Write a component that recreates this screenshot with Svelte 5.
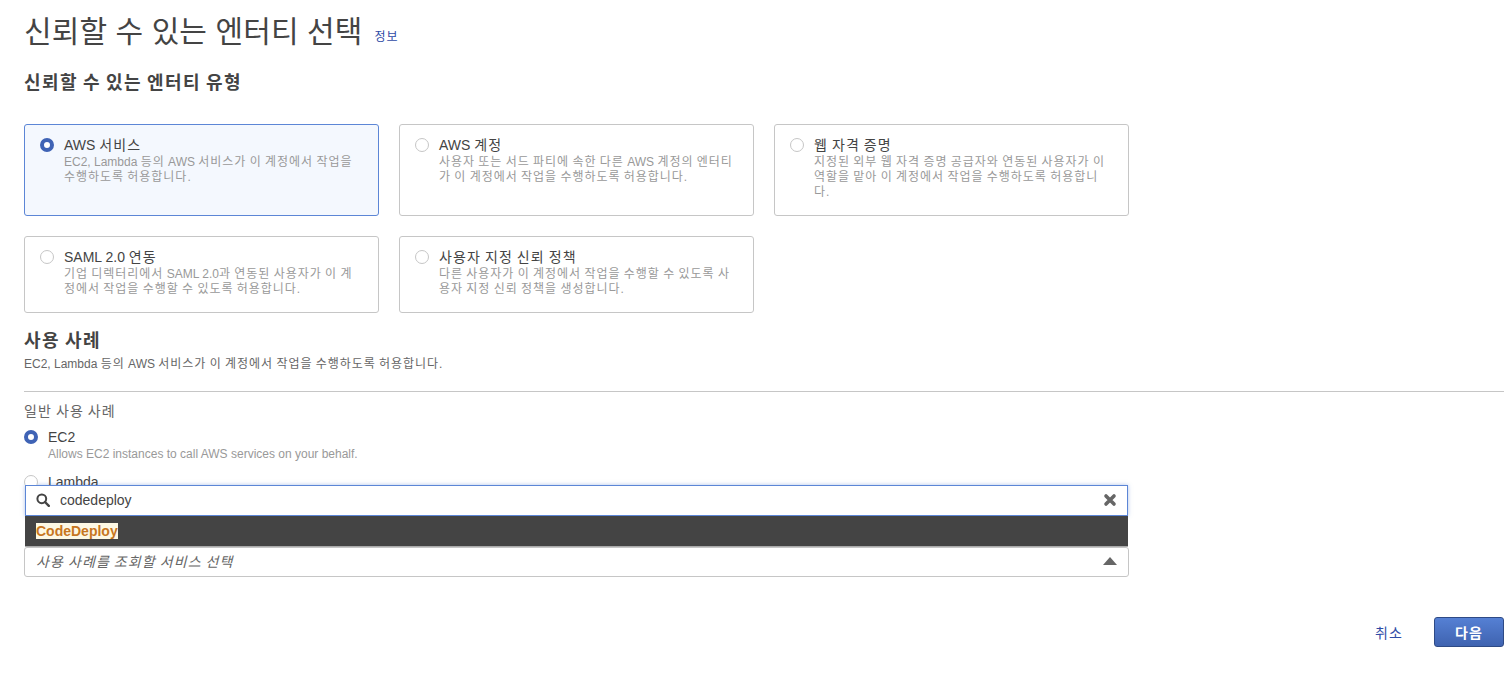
<script lang="ts">
  const entityTypes = [
    { title: "AWS 서비스", desc: "EC2, Lambda 등의 AWS 서비스가 이 계정에서 작업을 수행하도록 허용합니다.", selected: true },
    { title: "AWS 계정", desc: "사용자 또는 서드 파티에 속한 다른 AWS 계정의 엔터티가 이 계정에서 작업을 수행하도록 허용합니다.", selected: false },
    { title: "웹 자격 증명", desc: "지정된 외부 웹 자격 증명 공급자와 연동된 사용자가 이 역할을 맡아 이 계정에서 작업을 수행하도록 허용합니다.", selected: false },
    { title: "SAML 2.0 연동", desc: "기업 디렉터리에서 SAML 2.0과 연동된 사용자가 이 계정에서 작업을 수행할 수 있도록 허용합니다.", selected: false },
    { title: "사용자 지정 신뢰 정책", desc: "다른 사용자가 이 계정에서 작업을 수행할 수 있도록 사용자 지정 신뢰 정책을 생성합니다.", selected: false }
  ];

  // hangul is set wider than latin in the original font
  function runs(text: string) {
    return text.split(/([\uAC00-\uD7A3]+)/).filter(Boolean).map((t) => ({
      t,
      ko: /[\uAC00-\uD7A3]/.test(t)
    }));
  }
</script>

{#snippet ko(text: string)}{#each runs(text) as run}<span class:ko={run.ko}>{run.t}</span>{/each}{/snippet}

<div class="page">
  <div class="title-row">
    <h1>신뢰할 수 있는 엔터티 선택</h1>
    <a class="info" href="#info">{@render ko("정보")}</a>
  </div>

  <h2 class="entity-heading">{@render ko("신뢰할 수 있는 엔터티 유형")}</h2>

  <div class="cards">
    {#each entityTypes as item}
      <div class="card" class:selected={item.selected}>
        <span class="radio" class:on={item.selected}></span>
        <div class="card-body">
          <div class="card-title">{@render ko(item.title)}</div>
          <div class="card-desc">{@render ko(item.desc)}</div>
        </div>
      </div>
    {/each}
  </div>

  <h2 class="usecase-heading">{@render ko("사용 사례")}</h2>
  <p class="usecase-desc">{@render ko("EC2, Lambda 등의 AWS 서비스가 이 계정에서 작업을 수행하도록 허용합니다.")}</p>
  <hr />

  <div class="common-label">{@render ko("일반 사용 사례")}</div>
  <div class="option">
    <span class="radio on"></span>
    <div>
      <div class="option-title">EC2</div>
      <div class="option-desc">Allows EC2 instances to call AWS services on your behalf.</div>
    </div>
  </div>
  <div class="lambda-clip">
    <div class="option">
      <span class="radio"></span>
      <div class="option-title">Lambda</div>
    </div>
  </div>

  <div class="select-area">
    <div class="search">
      <svg class="search-icon" viewBox="0 0 14 14" width="14" height="14">
        <circle cx="5.8" cy="5.8" r="4.4" fill="none" stroke="#444" stroke-width="2" />
        <path d="M9 9l3.8 3.8" stroke="#444" stroke-width="2.4" stroke-linecap="round" />
      </svg>
      <span class="search-text">codedeploy</span>
      <svg class="clear-icon" viewBox="0 0 14 14" width="14" height="14">
        <path d="M3 3l8 8M11 3l-8 8" stroke="#666" stroke-width="3.6" stroke-linecap="round" />
      </svg>
    </div>
    <div class="result"><mark>CodeDeploy</mark></div>
    <div class="select">
      <span class="placeholder">{@render ko("사용 사례를 조회할 서비스 선택")}</span>
      <span class="caret"></span>
    </div>
  </div>

  <div class="actions">
    <a class="cancel" href="#cancel">{@render ko("취소")}</a>
    <button class="next" type="button">{@render ko("다음")}</button>
  </div>
</div>

<style>
  :global(body) {
    margin: 0;
    background: #fff;
  }

  .page {
    box-sizing: border-box;
    width: 1509px;
    height: 673px;
    padding: 0 5px 0 24px;
    overflow: hidden;
    color: #444;
    font-family: "Liberation Sans", "Noto Sans CJK KR", sans-serif;
    font-size: 14px;
  }

  .ko {
    letter-spacing: 0.08em;
  }

  .title-row {
    display: flex;
    align-items: flex-start;
    box-sizing: border-box;
    height: 62px;
    padding-top: 12px;
  }

  h1 {
    margin: 0;
    font-size: 30px;
    font-weight: 400;
    line-height: 40px;
    letter-spacing: 0.1px;
    color: #444;
  }

  .info {
    margin: 18px 0 0 12px;
    font-size: 12px;
    line-height: 14px;
    color: #2f4ba6;
    text-decoration: none;
  }

  .entity-heading {
    margin: 8px 0 0;
    font-size: 18px;
    line-height: 26px;
    font-weight: 700;
    color: #444;
  }

  .cards {
    display: grid;
    grid-template-columns: repeat(3, 355px);
    grid-template-rows: 92px 77px;
    gap: 20px;
    margin-top: 28px;
  }

  .card {
    box-sizing: border-box;
    display: flex;
    gap: 10px;
    padding: 12px 15px;
    border: 1px solid #c6c6c6;
    border-radius: 3px;
    background: #fff;
  }

  .card.selected {
    border-color: #5c86d6;
    background: #f4f8fe;
  }

  .card-title {
    margin-bottom: 3px;
    font-size: 14px;
    line-height: 16px;
    color: #444;
  }

  .card-desc {
    margin-top: -1px;
    font-size: 12px;
    line-height: 15px;
    color: #999;
    word-break: break-all;
  }

  .radio {
    flex: none;
    box-sizing: border-box;
    width: 14px;
    height: 14px;
    margin-top: 1px;
    border: 1px solid #c6c6c6;
    border-radius: 50%;
    background: #fff;
  }

  .radio.on {
    border: 4px solid #3f63b5;
  }

  .usecase-heading {
    margin: 16px 0 0;
    font-size: 18px;
    line-height: 24px;
    font-weight: 700;
    color: #444;
  }

  .usecase-desc {
    margin: 4px 0 0;
    font-size: 12px;
    line-height: 15px;
    color: #666;
  }

  hr {
    margin: 19px 0 0;
    border: 0;
    border-top: 1px solid #c6c6c6;
  }

  .common-label {
    margin-top: 10px;
    font-size: 14px;
    line-height: 18px;
    color: #666;
  }

  .option {
    display: flex;
    gap: 10px;
    margin-top: 9px;
  }

  .option-title {
    font-size: 14px;
    line-height: 17px;
    color: #444;
  }

  .option-desc {
    font-size: 12px;
    line-height: 16px;
    color: #999;
  }

  .lambda-clip {
    height: 20px;
    margin-top: 3px;
    overflow: hidden;
  }

  .select-area {
    width: 1105px;
  }

  .search {
    box-sizing: border-box;
    display: flex;
    align-items: center;
    height: 31px;
    margin: 0 1px;
    padding: 0 10px 2px;
    border: 1px solid #5c86d6;
    background: #fff;
    box-shadow: 0 0 4px rgba(92, 134, 214, 0.5);
  }

  .search-text {
    margin-left: 10px;
    font-size: 14px;
    color: #444;
  }

  .clear-icon {
    margin-left: auto;
  }

  .result {
    box-sizing: border-box;
    height: 31px;
    margin: 0 1px;
    padding: 7px 11px 0;
    background: #444;
    border-bottom: 1px solid #aaa;
    line-height: 16px;
  }

  mark {
    font-weight: 700;
    font-size: 14px;
    color: #c7761f;
    background: #fdf8e4;
  }

  .select {
    box-sizing: border-box;
    display: flex;
    align-items: center;
    justify-content: space-between;
    height: 30px;
    padding: 0 11px 2px;
    border: 1px solid #c6c6c6;
    border-radius: 3px;
    background: #fff;
  }

  .placeholder {
    font-style: italic;
    color: #666;
    font-size: 14px;
  }

  .caret {
    width: 0;
    height: 0;
    border-left: 7px solid transparent;
    border-right: 7px solid transparent;
    border-bottom: 8px solid #666;
  }

  .actions {
    display: flex;
    justify-content: flex-end;
    align-items: center;
    gap: 31px;
    margin-top: 40px;
  }

  .cancel {
    font-size: 14px;
    color: #2f4ba6;
    text-decoration: none;
  }

  .next {
    box-sizing: border-box;
    width: 70px;
    height: 30px;
    border: 1px solid #2e4a85;
    border-radius: 3px;
    background: linear-gradient(#5580d4, #3f63b0);
    color: #fff;
    font: 700 14px "Liberation Sans", "Noto Sans CJK KR", sans-serif;
  }
</style>
